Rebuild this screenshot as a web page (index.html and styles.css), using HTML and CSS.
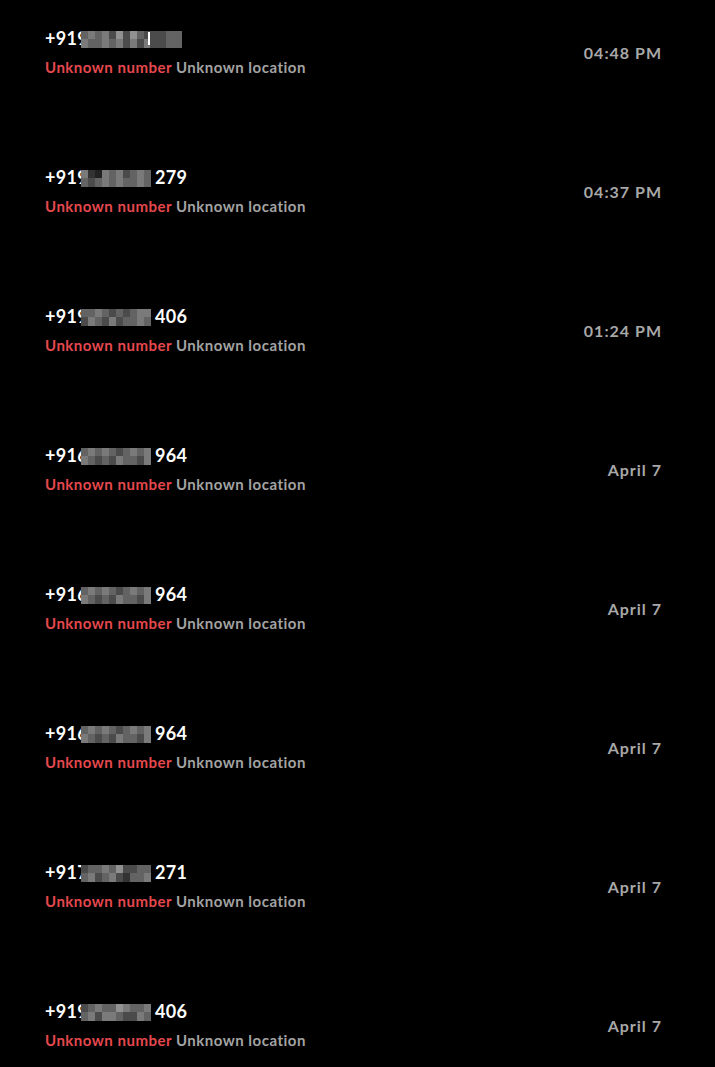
FILE: index.html
```html
<!DOCTYPE html>
<html lang="en">
<head>
    <meta charset="UTF-8">
    <meta name="viewport" content="width=device-width, initial-scale=1.0">
    <title>Call log</title>
    <link rel="stylesheet" href="styles.css">
</head>
<body>
    <ul class="calls">
        <li class="call">
            <div class="info">
                <div class="number">+919<span class="pix" data-cells="4545363643 5445453535"></span><span class="sliver"></span><span class="pix big" data-cells="34 34"></span></div>
                <div class="meta"><span class="tag">Unknown number</span> <span class="loc">Unknown location</span></div>
            </div>
            <div class="time">04:48 PM</div>
        </li>
        <li class="call">
            <div class="info">
                <div class="number">+919<span class="pix" data-cells="5215453454 4345454454"></span>279</div>
                <div class="meta"><span class="tag">Unknown number</span> <span class="loc">Unknown location</span></div>
            </div>
            <div class="time">04:37 PM</div>
        </li>
        <li class="call">
            <div class="info">
                <div class="number">+919<span class="pix" data-cells="4454343455 3543534454"></span>406</div>
                <div class="meta"><span class="tag">Unknown number</span> <span class="loc">Unknown location</span></div>
            </div>
            <div class="time">01:24 PM</div>
        </li>
        <li class="call">
            <div class="info">
                <div class="number">+916<span class="pix" data-cells="4545434545 5434354435"></span>964</div>
                <div class="meta"><span class="tag">Unknown number</span> <span class="loc">Unknown location</span></div>
            </div>
            <div class="time">April 7</div>
        </li>
        <li class="call">
            <div class="info">
                <div class="number">+916<span class="pix" data-cells="4545434545 5434354435"></span>964</div>
                <div class="meta"><span class="tag">Unknown number</span> <span class="loc">Unknown location</span></div>
            </div>
            <div class="time">April 7</div>
        </li>
        <li class="call">
            <div class="info">
                <div class="number">+916<span class="pix" data-cells="4545434545 5434354435"></span>964</div>
                <div class="meta"><span class="tag">Unknown number</span> <span class="loc">Unknown location</span></div>
            </div>
            <div class="time">April 7</div>
        </li>
        <li class="call">
            <div class="info">
                <div class="number">+917<span class="pix" data-cells="3445463344 4534532445"></span>271</div>
                <div class="meta"><span class="tag">Unknown number</span> <span class="loc">Unknown location</span></div>
            </div>
            <div class="time">April 7</div>
        </li>
        <li class="call">
            <div class="info">
                <div class="number">+919<span class="pix" data-cells="3454465445 4535543354"></span>406</div>
                <div class="meta"><span class="tag">Unknown number</span> <span class="loc">Unknown location</span></div>
            </div>
            <div class="time">April 7</div>
        </li>
    </ul>

    <script>
        // Build the blurred digits from the shade strings (two rows of cells)
        document.querySelectorAll('.pix').forEach(function(pix) {
            const rows = pix.dataset.cells.split(' ');
            const size = pix.classList.contains('big') ? 16 : 7;
            pix.style.gridTemplateColumns = `repeat(${rows[0].length}, ${size}px)`;
            rows.forEach(function(row) {
                row.split('').forEach(function(shade) {
                    const cell = document.createElement('i');
                    cell.className = 'shade' + shade;
                    pix.appendChild(cell);
                });
            });
        });
    </script>
</body>
</html>
```

FILE: styles.css
```css
body {
    margin: 0;
    background: #000;
    font-family: Lato, "Open Sans", sans-serif;
}
.calls {
    list-style: none;
    margin: 0;
    padding: 0;
}
.call {
    display: flex;
    align-items: center;
    justify-content: space-between;
    height: 139px;
    box-sizing: border-box;
    padding: 0 53px 35px 45px;
}
.number {
    color: #fff;
    font-size: 18px;
    font-weight: 700;
    letter-spacing: 0.3px;
    line-height: 18px;
}
.pix {
    display: inline-grid;
    grid-auto-rows: 8.5px;
    vertical-align: 5.5px;
    margin: 0 4px 0 -7px;
}
.pix.big {
    margin-left: 0;
}
.pix i {
    display: block;
}
.sliver {
    display: inline-block;
    width: 2px;
    height: 13px;
    margin: 0 0 0 -7px;
    background: #fff;
    vertical-align: 0;
}
.shade1 { background: #222; }
.shade2 { background: #333; }
.shade3 { background: #4b4b4b; }
.shade4 { background: #636363; }
.shade5 { background: #7a7a7a; }
.shade6 { background: #919191; }
.meta {
    margin-top: 10px;
    font-size: 15px;
    font-weight: 700;
    letter-spacing: 0.5px;
    line-height: 18px;
}
.tag {
    color: #e5484d;
}
.loc {
    color: #a3a3a3;
}
.time {
    color: #a8a8a8;
    font-size: 16px;
    font-weight: 700;
    letter-spacing: 1px;
}
```
